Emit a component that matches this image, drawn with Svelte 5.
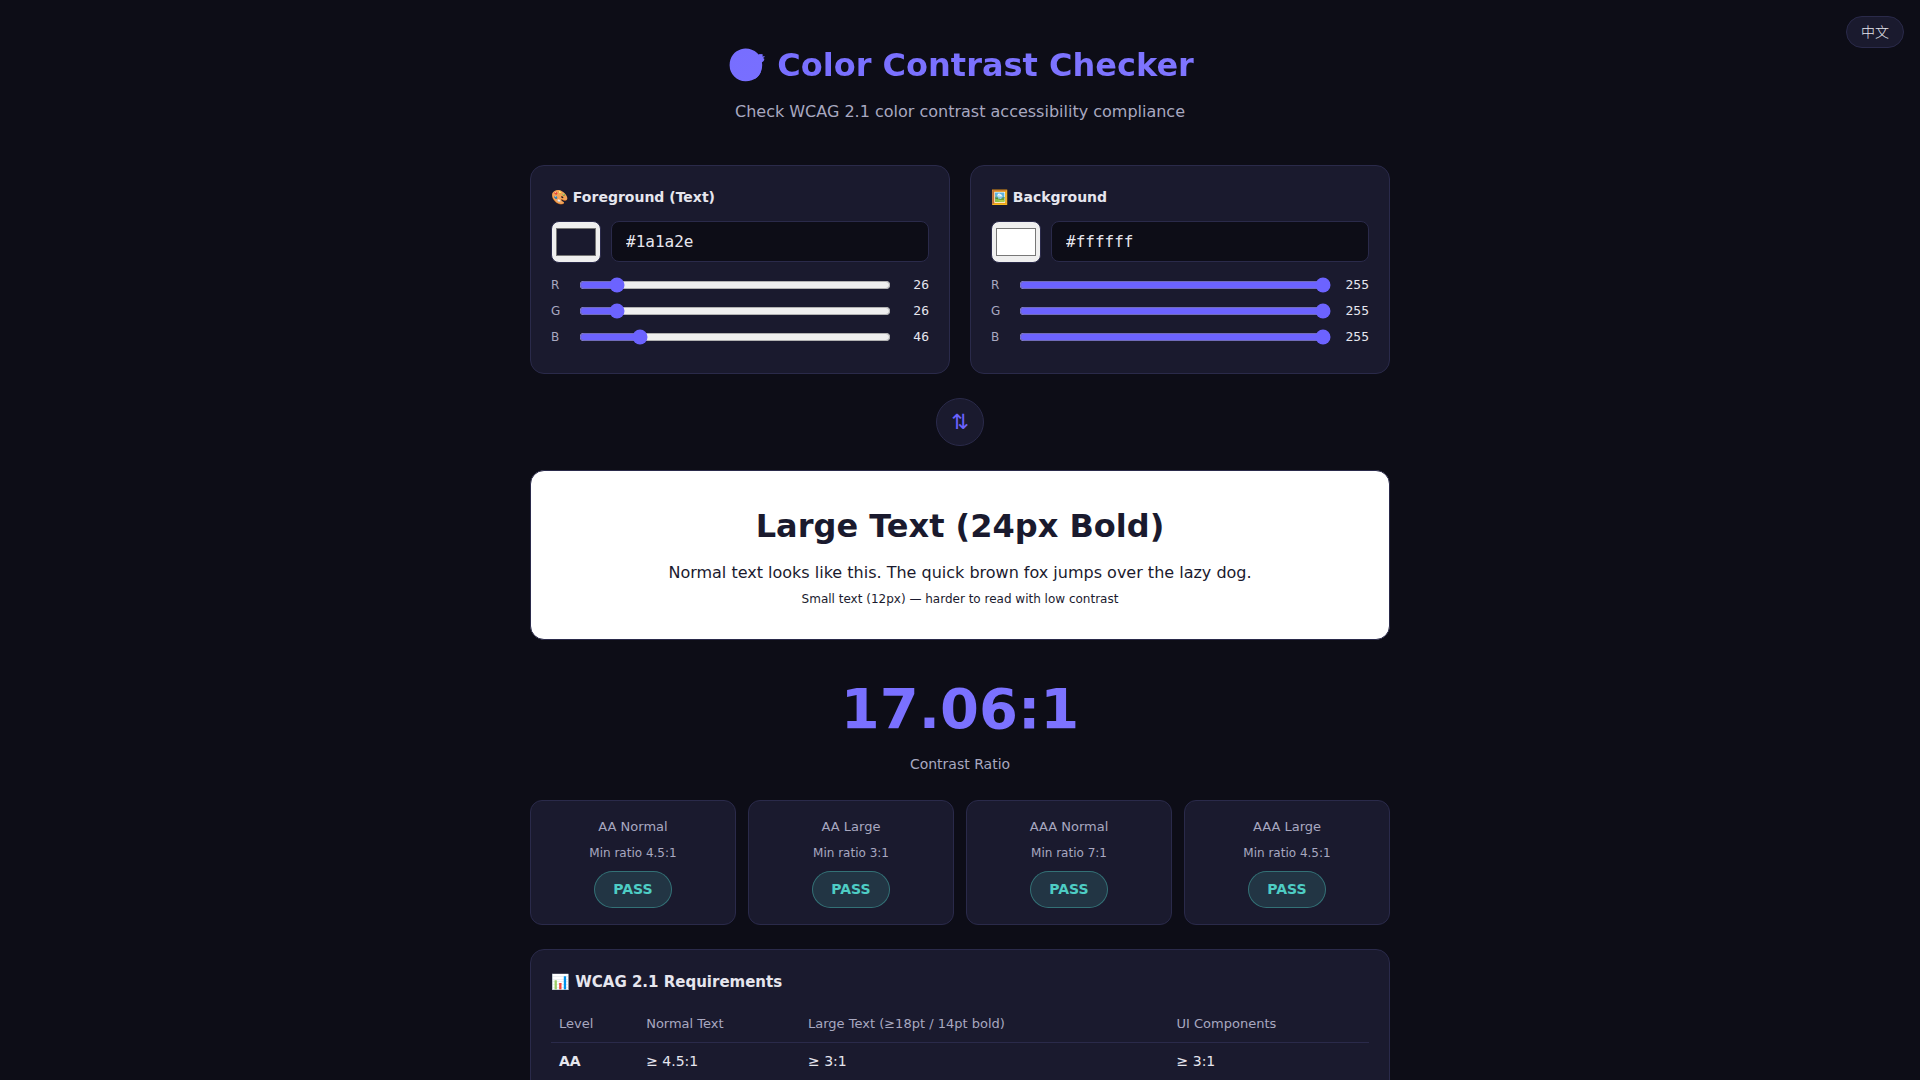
<script>
	let lang = $state('en');
	let colors = $state({
		fg: { r: 26, g: 26, b: 46 },
		bg: { r: 255, g: 255, b: 255 }
	});

	const strings = {
		en: {
			toggle: '中文',
			title: 'Color Contrast Checker',
			subtitle: 'Check WCAG 2.1 color contrast accessibility compliance',
			fg: 'Foreground (Text)',
			bg: 'Background',
			large: 'Large Text (24px Bold)',
			normal: 'Normal text looks like this. The quick brown fox jumps over the lazy dog.',
			small: 'Small text (12px) — harder to read with low contrast',
			ratio: 'Contrast Ratio',
			min: 'Min ratio',
			pass: 'PASS',
			fail: 'FAIL',
			requirements: 'WCAG 2.1 Requirements',
			columns: ['Level', 'Normal Text', 'Large Text (≥18pt / 14pt bold)', 'UI Components']
		},
		zh: {
			toggle: 'English',
			title: '颜色对比度检查器',
			subtitle: '检查 WCAG 2.1 颜色对比度无障碍合规性',
			fg: '前景色（文字）',
			bg: '背景色',
			large: '大号文字（24px 粗体）',
			normal: '普通文字看起来是这样的。',
			small: '小号文字（12px）— 低对比度下更难阅读',
			ratio: '对比度',
			min: '最低对比度',
			pass: '通过',
			fail: '未通过',
			requirements: 'WCAG 2.1 要求',
			columns: ['级别', '普通文字', '大号文字（≥18pt / 14pt 粗体）', 'UI 组件']
		}
	};

	const levels = [
		{ name: 'AA Normal', min: 4.5 },
		{ name: 'AA Large', min: 3 },
		{ name: 'AAA Normal', min: 7 },
		{ name: 'AAA Large', min: 4.5 }
	];

	const requirements = [
		{ level: 'AA', values: ['≥ 4.5:1', '≥ 3:1', '≥ 3:1'] }
	];

	const panels = [
		{ key: 'fg', icon: '🎨' },
		{ key: 'bg', icon: '🖼️' }
	];

	let t = $derived(strings[lang]);
	let ratio = $derived(contrast(colors.fg, colors.bg));

	function toHex({ r, g, b }) {
		return '#' + [r, g, b].map((v) => v.toString(16).padStart(2, '0')).join('');
	}

	function setHex(key, value) {
		if (!/^#[0-9a-f]{6}$/i.test(value)) return;
		const n = parseInt(value.slice(1), 16);
		colors[key] = { r: n >> 16, g: (n >> 8) & 255, b: n & 255 };
	}

	function luminance({ r, g, b }) {
		const [lr, lg, lb] = [r, g, b].map((v) => {
			const c = v / 255;
			return c <= 0.03928 ? c / 12.92 : ((c + 0.055) / 1.055) ** 2.4;
		});
		return 0.2126 * lr + 0.7152 * lg + 0.0722 * lb;
	}

	function contrast(a, b) {
		const la = luminance(a);
		const lb = luminance(b);
		return (Math.max(la, lb) + 0.05) / (Math.min(la, lb) + 0.05);
	}

	function swap() {
		colors = { fg: colors.bg, bg: colors.fg };
	}
</script>

<button class="lang-toggle" onclick={() => (lang = lang === 'en' ? 'zh' : 'en')}>{t.toggle}</button>

<main class="container">
	<header>
		<h1>🎯 {t.title}</h1>
		<p class="subtitle">{t.subtitle}</p>
	</header>

	<div class="pickers">
		{#each panels as panel}
			<section class="card">
				<h2>{panel.icon} {t[panel.key]}</h2>
				<div class="color-row">
					<input
						type="color"
						aria-label="{t[panel.key]} color"
						value={toHex(colors[panel.key])}
						oninput={(e) => setHex(panel.key, e.target.value)}
					/>
					<input
						type="text"
						class="hex"
						aria-label="{t[panel.key]} hex"
						maxlength="7"
						value={toHex(colors[panel.key])}
						oninput={(e) => setHex(panel.key, e.target.value)}
					/>
				</div>
				{#each ['r', 'g', 'b'] as channel}
					<div class="slider-row">
						<label for="{panel.key}-{channel}">{channel.toUpperCase()}</label>
						<input
							type="range"
							id="{panel.key}-{channel}"
							min="0"
							max="255"
							bind:value={colors[panel.key][channel]}
						/>
						<span class="value">{colors[panel.key][channel]}</span>
					</div>
				{/each}
			</section>
		{/each}
	</div>

	<button class="swap" aria-label="Swap colors" onclick={swap}>⇅</button>

	<section class="preview" style:color={toHex(colors.fg)} style:background={toHex(colors.bg)}>
		<div class="large">{t.large}</div>
		<div class="normal">{t.normal}</div>
		<div class="small">{t.small}</div>
	</section>

	<section class="ratio">
		<div class="ratio-value">{ratio.toFixed(2)}:1</div>
		<div class="ratio-label">{t.ratio}</div>
	</section>

	<div class="results">
		{#each levels as level}
			<div class="result">
				<div class="result-name">{level.name}</div>
				<div class="result-min">{t.min} {level.min}:1</div>
				<span class="badge" class:fail={ratio < level.min}>
					{ratio >= level.min ? t.pass : t.fail}
				</span>
			</div>
		{/each}
	</div>

	<section class="card requirements">
		<h2>📊 {t.requirements}</h2>
		<table>
			<thead>
				<tr>
					{#each t.columns as column}
						<th>{column}</th>
					{/each}
				</tr>
			</thead>
			<tbody>
				{#each requirements as row}
					<tr>
						<td><strong>{row.level}</strong></td>
						{#each row.values as value}
							<td>{value}</td>
						{/each}
					</tr>
				{/each}
			</tbody>
		</table>
	</section>
</main>

<style>
	:global(body) {
		background: #0d0d17;
		color: #e6e6ee;
		font-family: "DejaVu Sans", "Noto Sans CJK SC", sans-serif;
		font-size: 16px;
		line-height: 1.6;
	}

	h1,
	h2,
	p {
		margin: 0;
	}

	input,
	button {
		box-sizing: border-box;
		margin: 0;
		font-family: inherit;
	}

	.container {
		max-width: 860px;
		margin: 0 auto;
		padding: 40px 20px;
	}

	.lang-toggle {
		position: fixed;
		top: 16px;
		right: 16px;
		padding: 6px 14px;
		background: #1a1a2e;
		color: #e6e6ee;
		border: 1px solid #2a2a4a;
		border-radius: 20px;
		font-size: 14px;
		font-weight: 300;
		line-height: 18px;
		cursor: pointer;
	}

	header {
		text-align: center;
		margin-bottom: 40px;
	}

	h1 {
		font-size: 32px;
		font-weight: 700;
		margin-bottom: 8px;
	}

	h1,
	.ratio-value {
		background: linear-gradient(135deg, #746bff, #8278ff);
		-webkit-background-clip: text;
		background-clip: text;
		-webkit-text-fill-color: transparent;
	}

	.subtitle {
		color: #a8a8c0;
	}

	.pickers {
		display: grid;
		grid-template-columns: 1fr 1fr;
		gap: 20px;
	}

	.card {
		background: #1a1a2e;
		border: 1px solid #2a2a4a;
		border-radius: 14px;
		padding: 20px;
	}

	h2 {
		font-size: 14px;
		font-weight: 600;
		line-height: 23px;
		margin-bottom: 12px;
	}

	.color-row {
		display: flex;
		align-items: center;
		gap: 10px;
		margin-bottom: 12px;
	}

	input[type='color'] {
		width: 50px;
		height: 42px;
		padding: 2px;
		border: 1px solid #2a2a4a;
		border-radius: 8px;
		cursor: pointer;
	}

	.hex {
		flex: 1;
		min-width: 0;
		padding: 10px 14px;
		background: #0d0d17;
		color: #e6e6ee;
		border: 1px solid #2a2a4a;
		border-radius: 8px;
		font-family: "DejaVu Sans Mono", monospace;
		font-size: 16px;
	}

	.hex:focus {
		outline: none;
		border-color: #6c63ff;
	}

	.slider-row {
		display: flex;
		align-items: center;
		gap: 8px;
		height: 21px;
		margin-bottom: 5px;
		font-size: 12px;
	}

	.slider-row label {
		width: 20px;
		color: #a8a8c0;
	}

	.slider-row input {
		flex: 1;
		min-width: 0;
		accent-color: #6c63ff;
	}

	.value {
		width: 30px;
		font-family: "DejaVu Sans Mono", monospace;
		font-size: 13px;
		text-align: right;
	}

	.swap {
		display: flex;
		align-items: center;
		justify-content: center;
		width: 48px;
		height: 48px;
		margin: 24px auto;
		background: #1a1a2e;
		color: #6c63ff;
		border: 1px solid #2a2a4a;
		border-radius: 50%;
		font-size: 21px;
		cursor: pointer;
	}

	.swap:hover {
		border-color: #6c63ff;
	}

	.preview {
		border: 1px solid #2a2a4a;
		border-radius: 14px;
		padding: 30px;
		text-align: center;
	}

	.large {
		font-size: 32px;
		font-weight: 700;
		margin-bottom: 8px;
	}

	.normal {
		margin-bottom: 4px;
	}

	.small {
		font-size: 12px;
	}

	.ratio {
		margin: 24px 0;
		text-align: center;
	}

	.ratio-value {
		font-size: 56px;
		font-weight: 800;
	}

	.ratio-label {
		color: #a8a8c0;
		font-size: 14px;
	}

	.results {
		display: grid;
		grid-template-columns: repeat(4, 1fr);
		gap: 12px;
		margin-bottom: 24px;
	}

	.result {
		background: #1a1a2e;
		border: 1px solid #2a2a4a;
		border-radius: 12px;
		padding: 16px;
		text-align: center;
		color: #a8a8c0;
	}

	.result-name {
		font-size: 13px;
		margin-bottom: 6px;
	}

	.result-min {
		font-size: 12px;
		margin-bottom: 8px;
	}

	.badge {
		display: inline-block;
		vertical-align: top;
		padding: 6px 18px;
		background: rgba(78, 205, 196, 0.15);
		color: #4ecdc4;
		border: 1px solid rgba(78, 205, 196, 0.4);
		border-radius: 20px;
		font-size: 14px;
		font-weight: 700;
		line-height: 23px;
	}

	.badge.fail {
		background: rgba(255, 107, 107, 0.15);
		color: #ff6b6b;
		border-color: rgba(255, 107, 107, 0.4);
	}

	.requirements h2 {
		font-size: 15px;
		line-height: 24px;
	}

	table {
		width: 100%;
		border-collapse: collapse;
		font-size: 14px;
		line-height: 21px;
	}

	th,
	td {
		padding: 8px;
		text-align: left;
		border-bottom: 1px solid #2a2a4a;
	}

	th {
		color: #a8a8c0;
		font-size: 13px;
		font-weight: 500;
		line-height: 20px;
	}

	@media (max-width: 700px) {
		.pickers {
			grid-template-columns: 1fr;
		}

		.results {
			grid-template-columns: 1fr 1fr;
		}
	}
</style>
